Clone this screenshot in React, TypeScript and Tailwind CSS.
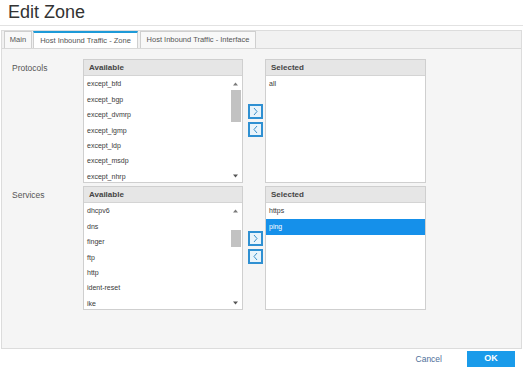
import React from "react";

const protocols = [
  "except_bfd",
  "except_bgp",
  "except_dvmrp",
  "except_igmp",
  "except_ldp",
  "except_msdp",
  "except_nhrp",
];
const services = ["dhcpv6", "dns", "finger", "ftp", "http", "ident-reset", "ike"];

function Arrow({ dir }: { dir: "up" | "down" }) {
  return (
    <svg width="5" height="4" viewBox="0 0 5 4" className="mx-auto">
      {dir === "up" ? (
        <polygon points="2.5,0.5 5,3.5 0,3.5" fill="#7a7a7a" />
      ) : (
        <polygon points="0,0.5 5,0.5 2.5,3.5" fill="#555" />
      )}
    </svg>
  );
}

function MoveButton({ dir }: { dir: "right" | "left" }) {
  return (
    <div className="w-[15px] h-[15px] border-2 border-[#2f90d2] bg-[#e9f4fb] flex items-center justify-center">
      <svg width="7" height="9" viewBox="0 0 7 9">
        <polyline
          points={dir === "right" ? "2,1 5,4.5 2,8" : "5,1 2,4.5 5,8"}
          fill="none"
          stroke="#3b8fc8"
          strokeWidth="1"
        />
      </svg>
    </div>
  );
}

function ListBox({
  title,
  items,
  selected,
  thumbTop,
  thumbHeight,
  width,
}: {
  title: string;
  items: string[];
  selected?: number;
  thumbTop?: number;
  thumbHeight?: number;
  width: string;
}) {
  const scroll = thumbTop !== undefined;
  return (
    <div className={`${width} h-[124px] border border-[#cfcfcf] flex flex-col bg-white`}>
      <div className="h-[16px] shrink-0 bg-[#e6e6e6] border-b border-[#d4d4d4] pl-[5px] flex items-center text-[8px] font-semibold text-[#444]">
        {title}
      </div>
      <div className="flex flex-1 min-h-0">
        <div className="flex-1 pt-[1px]">
          {items.map((it, i) => (
            <div
              key={it}
              className={`h-[15.4px] pl-[3px] flex items-center text-[7px] ${
                selected === i ? "bg-[#1590ea] text-white" : "text-[#3a3a3a]"
              }`}
            >
              {it}
            </div>
          ))}
        </div>
        {scroll && (
          <div className="w-[11px] flex flex-col pt-[6px] pb-[4px] mr-[1px]">
            <Arrow dir="up" />
            <div className="flex-1 relative">
              <div
                className="absolute left-[1px] right-0 bg-[#c2c2c2]"
                style={{ top: thumbTop, height: thumbHeight }}
              />
            </div>
            <Arrow dir="down" />
          </div>
        )}
      </div>
    </div>
  );
}

function Section({
  label,
  avail,
  sel,
  selIdx,
  thumbTop,
  thumbHeight,
}: {
  label: string;
  avail: string[];
  sel: string[];
  selIdx?: number;
  thumbTop: number;
  thumbHeight: number;
}) {
  return (
    <div className="flex">
      <div className="w-[71px] pt-[3px] text-[8.5px] text-[#555]">{label}</div>
      <ListBox
        title="Available"
        items={avail}
        thumbTop={thumbTop}
        thumbHeight={thumbHeight}
        width="w-[160px]"
      />
      <div className="ml-[5px] mr-[2px] flex flex-col justify-center gap-[3px] pb-[2px]">
        <MoveButton dir="right" />
        <MoveButton dir="left" />
      </div>
      <ListBox title="Selected" items={sel} selected={selIdx} width="w-[161px]" />
    </div>
  );
}

export default function App() {
  return (
    <div
      className="w-[523px] h-[372px] bg-white flex flex-col overflow-hidden"
      style={{ fontFamily: '"Liberation Sans", Arial, sans-serif' }}
    >
      <div className="h-[26px] shrink-0 border-b border-[#e2e2e2] pl-[8px] text-[18px] leading-[24px] text-[#333]">
        Edit Zone
      </div>
      <div className="mt-[4px] ml-[1px] w-[521px] h-[319px] shrink-0 border border-[#dcdcdc] flex flex-col">
        <div className="h-[18px] shrink-0 bg-[#f1f1f1] border-b border-[#d8d8d8] flex items-end pl-[2px] gap-[1px]">
          <div className="w-[28px] h-[17px] border border-b-0 border-[#cfcfcf] bg-[#f8f8f8] text-[7.5px] text-[#555] flex items-center justify-center">
            Main
          </div>
          <div className="w-[105px] h-[17px] border border-b-0 border-[#cfcfcf] border-t-2 border-t-[#1d9ad8] bg-white text-[7.5px] text-[#555] flex items-center justify-center">
            Host Inbound Traffic - Zone
          </div>
          <div className="ml-[1px] w-[116px] h-[17px] border border-b-0 border-[#cfcfcf] bg-[#f8f8f8] text-[7.5px] text-[#555] flex items-center justify-center">
            Host Inbound Traffic - Interface
          </div>
        </div>
        <div className="flex-1 bg-[#f5f5f5] pt-[10px] pl-[10px] flex flex-col gap-[3px]">
          <Section
            label="Protocols"
            avail={protocols}
            sel={["all"]}
            thumbTop={4}
            thumbHeight={32}
          />
          <Section
            label="Services"
            avail={services}
            sel={["https", "ping"]}
            selIdx={1}
            thumbTop={17}
            thumbHeight={17}
          />
        </div>
      </div>
      <div className="flex-1 flex justify-end items-start pt-[2px] pr-[8px]">
        <div className="h-[16px] flex items-center mr-[25px] text-[8.5px] text-[#4f6f9a]">
          Cancel
        </div>
        <div className="w-[48px] h-[16px] bg-[#1a9bea] text-white text-[9px] font-bold flex items-center justify-center">
          OK
        </div>
      </div>
    </div>
  );
}
